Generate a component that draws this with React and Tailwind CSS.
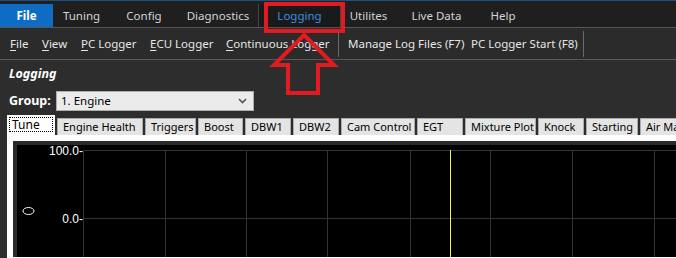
const TOP_TABS = [
  { label: 'Tuning', w: 57 },
  { label: 'Config', w: 68 },
  { label: 'Diagnostics', w: 80 },
  { label: 'Logging', w: 83, active: true },
  { label: 'Utilites', w: 55 },
  { label: 'Live Data', w: 81 },
  { label: 'Help', w: 52 },
];

const SUB_MENU = [
  { key: 'F', rest: 'ile', w: 32 },
  { key: 'V', rest: 'iew', w: 39 },
  { key: 'P', rest: 'C Logger', w: 69 },
  { key: 'E', rest: 'CU Logger', w: 76 },
  { key: 'C', rest: 'ontinuous Logger', w: 112 },
];

const LOG_TABS = [
  { label: 'Engine Health', w: 86 },
  { label: 'Triggers', w: 51 },
  { label: 'Boost', w: 45 },
  { label: 'DBW1', w: 46 },
  { label: 'DBW2', w: 46 },
  { label: 'Cam Control', w: 74 },
  { label: 'EGT', w: 46 },
  { label: 'Mixture Plot', w: 71 },
  { label: 'Knock', w: 46 },
  { label: 'Starting', w: 52 },
  { label: 'Air Manifold', w: 80 },
];

const GRID_X = [66, 148, 229, 310, 393, 473, 555, 637];

function Chart() {
  return (
    <svg width="659" height="112" className="block">
      <rect width="659" height="112" fill="#000" />
      <line x1="66" y1="5.5" x2="659" y2="5.5" stroke="#333" />
      <line x1="66" y1="73.5" x2="659" y2="73.5" stroke="#333" />
      {GRID_X.map(x => (
        <line key={x} x1={x + 0.5} y1="5" x2={x + 0.5} y2="112" stroke="#333" />
      ))}
      <line x1="433.5" y1="5" x2="433.5" y2="112" stroke="#f2f25a" />
      <text x="66" y="10" textAnchor="end" fill="#fff" fontSize="12" fontFamily="'Liberation Sans', sans-serif">100.0-</text>
      <text x="66" y="78" textAnchor="end" fill="#fff" fontSize="12" fontFamily="'Liberation Sans', sans-serif">0.0-</text>
      <ellipse cx="11.5" cy="66" rx="5.5" ry="3.5" fill="none" stroke="#fff" />
    </svg>
  );
}

export default function App() {
  return (
    <div className="relative w-[676px] h-[258px] overflow-hidden bg-[#2d2d2d] font-['Noto_Sans',sans-serif] text-[11.5px]">
      {/* top ribbon tabs */}
      <div className="flex h-[28px] pt-[3px] bg-[#1f1f1f] border-t border-[#1d4f7c] border-b border-b-[#555]">
        <div className="w-[53px] h-[23px] bg-[#0f6cc4] text-white font-bold flex items-center justify-center">File</div>
        {TOP_TABS.map(t => (
          <div
            key={t.label}
            style={{ width: t.w }}
            className={`h-[23px] flex items-center justify-center ${t.active ? 'text-[#3d8ee0] bg-[#1a1a1a] border-x border-[#444]' : 'text-[#d4d4d4]'}`}
          >
            {t.label}
          </div>
        ))}
      </div>

      {/* sub menu */}
      <div className="flex items-center h-[32px] bg-[#2b2b2b] border-b border-[#5a5a5a] text-[#e6e6e6] pl-[10px]">
        {SUB_MENU.map(m => (
          <div key={m.rest} style={{ width: m.w }} className="shrink-0 whitespace-nowrap">
            <span className="underline underline-offset-2">{m.key}</span>{m.rest}
          </div>
        ))}
        <div className="w-px h-[26px] bg-[#6a6a6a] shrink-0" />
        <div className="pl-[9px] w-[132px] shrink-0 whitespace-nowrap">Manage Log Files (F7)</div>
        <div className="w-[112px] shrink-0 whitespace-nowrap">PC Logger Start (F8)</div>
        <div className="w-px h-[26px] bg-[#6a6a6a] shrink-0" />
      </div>

      {/* body */}
      <div className="px-[9px] pt-[5px] text-white">
        <div className="font-bold italic text-[12.5px] leading-[17px]">Logging</div>
        <div className="flex items-center mt-[9px]">
          <span className="w-[47px] font-bold text-[12.5px]">Group:</span>
          <div className="w-[198px] h-[20px] bg-[#ebebeb] border border-[#adadad] flex items-center justify-between pl-[4px] pr-[6px] text-black">
            <span>1. Engine</span>
            <svg width="9" height="6" viewBox="0 0 9 6">
              <path d="M1 1 L4.5 4.5 L8 1" fill="none" stroke="#555" strokeWidth="1.6" />
            </svg>
          </div>
        </div>
      </div>

      {/* log tabs */}
      <div className="flex items-end gap-[2px] pl-[7px] mt-[4px] h-[20px] text-black text-[11px]">
        <div className="w-[48px] h-[20px] bg-white p-[2px] shrink-0">
          <div className="h-[15px] border border-dotted border-black flex items-center pl-[2px] leading-none text-[12px]">Tune</div>
        </div>
        {LOG_TABS.map(t => (
          <div
            key={t.label}
            style={{ width: t.w }}
            className="shrink-0 h-[17px] bg-[#e4e4e4] border border-b-0 border-[#acacac] pl-[5px] flex items-center whitespace-nowrap overflow-hidden"
          >
            {t.label}
          </div>
        ))}
      </div>

      {/* chart panel */}
      <div className="flex">
        <div className="w-[7px] shrink-0" />
        <div className="flex-1 bg-white pl-[6px] pt-[6px] h-[130px]">
          <div className="border-l-4 border-t-4 border-[#2a2a2a] bg-black">
            <Chart />
          </div>
        </div>
      </div>

      {/* annotation */}
      <div className="absolute left-[264px] top-[2px] w-[81px] h-[31px] border-4 border-[#e21b23]" />
      <svg className="absolute left-0 top-0 pointer-events-none" width="676" height="258">
        <polygon
          points="304,35 334,65 318,65 318,93 288,93 288,65 274,65"
          fill="none"
          stroke="#e21b23"
          strokeWidth="4"
          strokeLinejoin="miter"
        />
      </svg>
    </div>
  );
}
